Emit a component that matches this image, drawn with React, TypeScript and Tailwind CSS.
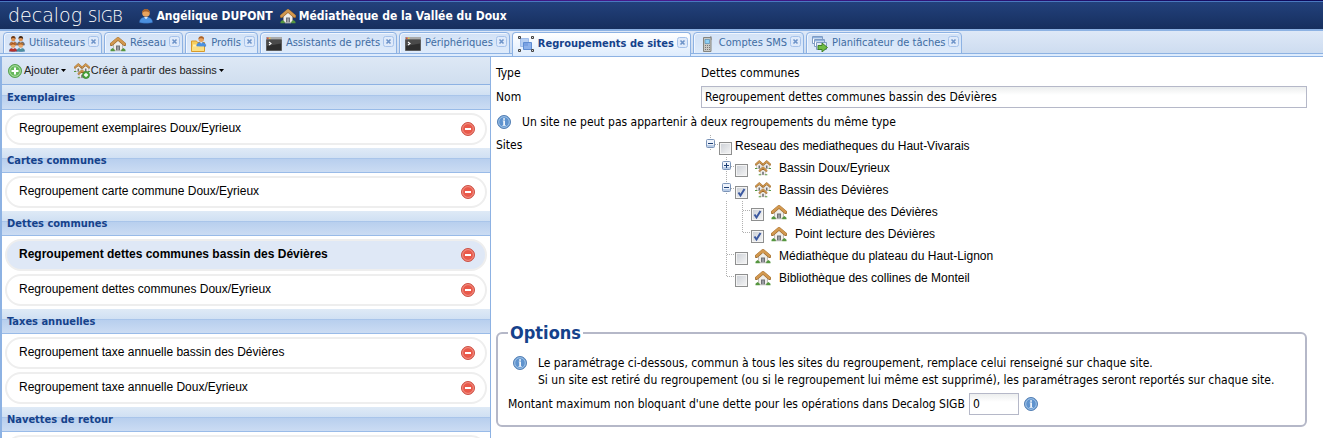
import { useState } from 'react';
import type { ReactNode } from 'react';

function HouseShape() {
  return (
    <>
      <path d="M3.500 7.500 8 3.500l4.500 4V14.500h-9z" fill="#efede9" stroke="#a9a49c" strokeWidth=".7" />
      <path d="M6 14.500V9.500h4v5z" fill="#6f7075" />
      <path d="M7.200 14.500v-4h1.600v4z" fill="#a5a8ae" />
      <path d="M1.500 8.300 8 2.700l6.500 5.600" fill="none" stroke="#96652a" strokeWidth="3.400" strokeLinecap="round" strokeLinejoin="round" />
      <path d="M1.600 8 8 2.500 14.400 8" fill="none" stroke="#d2984f" strokeWidth="2.400" strokeLinecap="round" strokeLinejoin="round" />
      <path d="M.500 15.200v-1.400L2.500 12l2.300 1.800v1.400zM11.200 15.200v-1.400l2.300-1.800 2 1.800v1.400z" fill="#55963f" />
      <path d="M5 14.500h6v.8H5z" fill="#c9c9c9" />
    </>
  );
}

function SmallHouseShape() {
  return (
    <>
      <path d="M1.500 3.500h5.500v5H1.500z" fill="#f1efeb" stroke="#b5afa6" strokeWidth=".5" />
      <path d="M3.500 5.500h1.600v3H3.500z" fill="#6f7075" />
      <path d="M1 4.500 4.300 1.500l3.300 3" fill="none" stroke="#96652a" strokeWidth="2.200" strokeLinecap="round" strokeLinejoin="round" />
      <path d="M1 4.300 4.300 1.300l3.300 3" fill="none" stroke="#cd964f" strokeWidth="1.500" strokeLinecap="round" strokeLinejoin="round" />
      <path d="M0 8h2.200v1H0zM6.400 8h2.200v1H6.400z" fill="#55963f" />
    </>
  );
}

function HouseIcon() {
  return (
    <svg viewBox="0 0 16 16" className="size-4 shrink-0" aria-hidden="true">
      <HouseShape />
    </svg>
  );
}

function HousesIcon({ plus }: { plus?: boolean }) {
  return (
    <svg viewBox="0 0 16 16" className="size-4 shrink-0" aria-hidden="true">
      <SmallHouseShape />
      <g transform="translate(7.400 0)"><SmallHouseShape /></g>
      <g transform="translate(3.700 6.200)"><SmallHouseShape /></g>
      {plus && (
        <>
          <circle cx="12" cy="12" r="3.500" fill="#4faa41" stroke="#2f7d27" strokeWidth=".7" />
          <path d="M12 10v4M10 12h4" stroke="#fff" strokeWidth="1.300" />
        </>
      )}
    </svg>
  );
}

function UserShape({ head = '#e8a35e', hair = '#a8612a', body = '#4a90e0' }) {
  return (
    <>
      <path d="M1.500 14.500C1.500 10.500 4.500 9 8 9s6.500 1.500 6.500 5.500c-2 .9-11 .9-13 0z" fill={body} stroke="#2d62ad" strokeOpacity=".5" strokeWidth=".8" />
      <path d="M6 9.200 8 11l2-1.800z" fill="#fff" />
      <circle cx="8" cy="5" r="3.800" fill={head} />
      <path d="M4.200 5.200C4 2.500 5.500.9 8 .9s4 1.600 3.800 4.300C10.500 3.800 9 3.600 7.500 3.600 6 3.600 5 4.200 4.200 5.200z" fill={hair} />
    </>
  );
}

function UserIcon() {
  return (
    <svg viewBox="0 0 16 16" className="size-4 shrink-0" aria-hidden="true">
      <UserShape />
    </svg>
  );
}

function UsersIcon() {
  return (
    <svg viewBox="0 0 16 16" className="size-4 shrink-0" aria-hidden="true">
      <g transform="translate(-.5 -.5) scale(.6 .66)"><UserShape body="#b9713c" hair="#6d3a16" head="#dd9150" /></g>
      <g transform="translate(7 -.5) scale(.6 .66)"><UserShape body="#7d6a58" hair="#3f2a1c" head="#dd9150" /></g>
      <g transform="translate(-.8 6.300) scale(.62)"><UserShape body="#b8322c" hair="#a8561c" head="#eda867" /></g>
      <g transform="translate(6.800 6.300) scale(.62)"><UserShape body="#4e8f9c" hair="#b06a2b" head="#eda867" /></g>
    </svg>
  );
}

function ProfileIcon() {
  return (
    <svg viewBox="0 0 16 16" className="size-4 shrink-0" aria-hidden="true">
      <path d="M.5 15.500V5h5l1 1.500h7v9z" fill="#f6cf5f" stroke="#d79a2b" />
      <path d="M2 8.500h10V14H2z" fill="#fdf0b4" />
      <g transform="translate(4.500 -.3) scale(.72)"><UserShape /></g>
      <path d="M1 10.500h12v4.500H1z" fill="#fbe084" />
    </svg>
  );
}

function ConsoleIcon() {
  return (
    <svg viewBox="0 0 16 16" className="size-4 shrink-0" aria-hidden="true">
      <path d="M.5 1.500h15v13H.5z" fill="#2e2e2e" stroke="#5d5d5d" />
      <path d="M0 1h16v2.500H0z" fill="#a9a9a9" />
      <path d="M1 1.500h1.500V3H1z" fill="#d64b3b" />
      <path d="M3 1.500h1.500V3H3z" fill="#e9c548" />
      <path d="M1 4h14v3.500L1 10z" fill="#4a4a4a" />
      <path d="m3 6 2 1.500L3 9" fill="none" stroke="#fff" strokeWidth="1.100" />
    </svg>
  );
}

function GroupIcon() {
  return (
    <svg viewBox="0 0 16 16" className="size-4 shrink-0" aria-hidden="true">
      <path d="M2.500 2.500h8v8h-8z" fill="#b7cff2" stroke="#a0bdea" />
      <path d="M5.500 6.500h8v7h-8z" fill="#8bb0ea" stroke="#5e8cd2" />
      <path d="M6 7h4v3H6z" fill="#78a0e2" />
      <path d="M.500.500h2v2h-2zM13.500.500h2v2h-2zM.500 13.500h2v2h-2zM13.500 13.500h2v2h-2z" fill="#ddd" stroke="#444" />
    </svg>
  );
}

function PhoneIcon() {
  return (
    <svg viewBox="0 0 16 16" className="size-4 shrink-0" aria-hidden="true">
      <path d="M11 .500h1.500V4H11z" fill="#777" />
      <path d="M4.500 1.500h7.500v14H4.500z" fill="#c8c8c4" stroke="#85857f" />
      <path d="M6 3.500h4.500v4H6z" fill="#8fd0f4" stroke="#4a86b0" strokeWidth=".6" />
      <path d="M6 9h1v1H6zm2 0h1v1H8zm2 0h1v1h-1zm-4 2h1v1H6zm2 0h1v1H8zm2 0h1v1h-1zm-4 2h1v1H6zm2 0h1v1H8zm2 0h1v1h-1z" fill="#777" />
    </svg>
  );
}

function PlannerIcon() {
  return (
    <svg viewBox="0 0 16 16" className="size-4 shrink-0" aria-hidden="true">
      <path d="M.5.500h10v7H.5z" fill="#fff" stroke="#7f9cc4" />
      <path d="M1 1h9v1.500H1z" fill="#8fb2df" />
      <path d="M2.500 3.500h10v7h-10z" fill="#fff" stroke="#7f9cc4" />
      <path d="M3 4h9v1.500H3z" fill="#8fb2df" />
      <path d="M4.500 6.500h10v7h-10z" fill="#dfe8f5" stroke="#7f9cc4" />
      <path d="M6 9.500h4V7l5.500 4.500L10 16v-2.500H6z" fill="#6fbd45" stroke="#38791f" strokeWidth=".9" />
    </svg>
  );
}

function InfoIcon() {
  return (
    <svg viewBox="0 0 16 16" className="size-4 shrink-0" role="img" aria-label="Information">
      <circle cx="8" cy="8" r="6.500" fill="#5f93ce" stroke="#5580b4" />
      <circle cx="8" cy="8" r="5.300" fill="none" stroke="#a9c9ea" strokeWidth=".9" />
      <path d="M7.200 4.200h1.700v1.500H7.200zM6.700 6.500h2.200V11h.8v.8H6.500V11h.8V7.300h-.6z" fill="#fff" />
    </svg>
  );
}

function RemoveIcon() {
  return (
    <svg viewBox="0 0 16 16" className="size-4" aria-hidden="true">
      <circle cx="8" cy="8" r="6.500" fill="#e9594a" stroke="#cb5347" />
      <circle cx="8" cy="8" r="5.400" fill="none" stroke="#f3a096" strokeWidth=".8" />
      <path d="M5 7h6v2H5z" fill="#fff" />
    </svg>
  );
}

function AddIcon() {
  return (
    <svg viewBox="0 0 16 16" className="size-4" aria-hidden="true">
      <circle cx="8" cy="8" r="6.500" fill="#67b95c" stroke="#57a14f" />
      <circle cx="8" cy="8" r="5.300" fill="none" stroke="#b5e0ac" strokeWidth=".9" />
      <path d="M7 4.500h2V7h2.500v2H9v2.500H7V9H4.500V7H7z" fill="#fff" />
    </svg>
  );
}

function Caret() {
  return (
    <svg viewBox="0 0 5 3" className="ml-px h-[3px] w-[5px]" aria-hidden="true">
      <path d="M0 0h5L2.500 3z" fill="#000" />
    </svg>
  );
}

function CloseIcon() {
  return (
    <svg viewBox="0 0 11 11" className="size-[11px]" aria-hidden="true">
      <rect x=".5" y=".5" width="10" height="10" rx="2" fill="#dfeafa" stroke="#a6c2ea" />
      <path d="m3.500 3.500 4 4m0-4-4 4" stroke="#6d93c8" strokeWidth="1.600" />
    </svg>
  );
}

const tabs = [
  { label: 'Utilisateurs', icon: UsersIcon },
  { label: 'Réseau', icon: HouseIcon },
  { label: 'Profils', icon: ProfileIcon },
  { label: 'Assistants de prêts', icon: ConsoleIcon },
  { label: 'Périphériques', icon: ConsoleIcon },
  { label: 'Regroupements de sites', icon: GroupIcon, active: true },
  { label: 'Comptes SMS', icon: PhoneIcon },
  { label: 'Planificateur de tâches', icon: PlannerIcon },
];

const groups = [
  { title: 'Exemplaires', items: ['Regroupement exemplaires Doux/Eyrieux'] },
  { title: 'Cartes communes', items: ['Regroupement carte commune Doux/Eyrieux'] },
  {
    title: 'Dettes communes',
    items: ['Regroupement dettes communes bassin des Dévières', 'Regroupement dettes communes Doux/Eyrieux'],
  },
  {
    title: 'Taxes annuelles',
    items: ['Regroupement taxe annuelle bassin des Dévières', 'Regroupement taxe annuelle Doux/Eyrieux'],
  },
  { title: 'Navettes de retour', items: [''] },
];

type Slot = 'minus' | 'plus' | 'line' | 'tee' | 'end';

const sites: { label: string; slots: Slot[]; icon?: 'house' | 'houses'; checked?: boolean }[] = [
  { label: 'Reseau des mediatheques du Haut-Vivarais', slots: ['minus'] },
  { label: 'Bassin Doux/Eyrieux', slots: ['plus'], icon: 'houses' },
  { label: 'Bassin des Dévières', slots: ['minus'], icon: 'houses', checked: true },
  { label: 'Médiathèque des Dévières', slots: ['line', 'tee'], icon: 'house', checked: true },
  { label: 'Point lecture des Dévières', slots: ['line', 'end'], icon: 'house', checked: true },
  { label: 'Médiathèque du plateau du Haut-Lignon', slots: ['tee'], icon: 'house' },
  { label: 'Bibliothèque des collines de Monteil', slots: ['end'], icon: 'house' },
];

// one 16x22 cell of the tree gutter: dotted guide line plus optional expander
function TreeSlot({ kind }: { kind: Slot }) {
  const expander = kind === 'minus' || kind === 'plus';
  return (
    <svg viewBox="0 0 16 22" className="h-[22px] w-4 shrink-0" aria-hidden="true">
      <g stroke="#b0b0b0" strokeDasharray="1 1">
        <path d={kind === 'end' ? 'M7.500 0v10' : kind === 'minus' ? 'M7.500 0v16' : 'M7.500 0v22'} />
        {kind !== 'line' && <path d="M8 9.500h7" />}
      </g>
      {expander && (
        <>
          <rect x="3.500" y="4.500" width="8" height="8" rx="1" fill="#eef3fb" stroke="#7b94b8" />
          <path d="M4 10h7v2H4z" fill="#b9cce6" />
          <path d={kind === 'plus' ? 'M5 8.500h5M7.500 6v5' : 'M5 8.500h5'} stroke="#1d3f75" />
        </>
      )}
    </svg>
  );
}

function SiteRow({ site, root }: { site: (typeof sites)[number]; root: boolean }) {
  return (
    <li className={`flex h-[22px] items-center ${root ? 'pl-0' : 'pl-4'}`}>
      {site.slots.map((kind, i) => (
        <TreeSlot key={i} kind={kind} />
      ))}
      <label className="flex items-center">
        <span className="mt-1 grid size-[13px]">
          <input
            type="checkbox"
            defaultChecked={site.checked}
            className="peer col-start-1 row-start-1 size-[13px] appearance-none border border-[#8e8f8f] bg-linear-to-br from-[#cbcfd5] to-[#f6f6f6] shadow-[inset_0_0_0_1px_#f4f4f4]"
          />
          <svg viewBox="0 0 13 13" className="pointer-events-none col-start-1 row-start-1 hidden size-[13px] peer-checked:block" aria-hidden="true">
            <path d="m3.500 6.500 2 3L9.500 3" fill="none" stroke="#3c59a0" strokeWidth="2" />
          </svg>
        </span>
        {site.icon && (
          <span className="mr-[5px] ml-[7px]">{site.icon === 'house' ? <HouseIcon /> : <HousesIcon />}</span>
        )}
        <span className="pl-[3px]">{site.label}</span>
      </label>
    </li>
  );
}

function ToolbarButton({ icon, children }: { icon: ReactNode; children: ReactNode }) {
  return (
    <button type="button" className="flex items-center gap-px">
      {icon}
      <span>{children}</span>
      <Caret />
    </button>
  );
}

export default function App() {
  const [selected, setSelected] = useState(groups[2].items[0]);

  return (
    <div className="flex h-screen flex-col overflow-hidden bg-white font-['DejaVu_Sans_Condensed','DejaVu_Sans',sans-serif] text-xs text-black">
      <div className="h-px shrink-0 bg-linear-to-r from-[#0c0a5a] via-[#4a1a8c] to-[#0c0a5a]" />
      <header className="flex h-[30px] shrink-0 items-center border-t border-b-2 border-t-[#4a78c0] border-b-[#8db2e3] bg-linear-to-b from-[#23417c] to-[#162f5e] pl-2 font-bold text-white">
        <a href="#" className="flex items-baseline gap-1.5 leading-none">
          <span className="font-['DejaVu_Sans',sans-serif] text-[19px] leading-6 font-extralight">decalog</span>
          <span className="font-['Open_Sans',sans-serif] text-base leading-6 font-light">SIGB</span>
        </a>
        <span className="ml-[15px] flex items-center gap-[3px]">
          <UserIcon />
          Angélique DUPONT
        </span>
        <span className="ml-[7px] flex items-center gap-[3px]">
          <HouseIcon />
          Médiathèque de la Vallée du Doux
        </span>
      </header>

      <nav className="flex h-[26px] shrink-0 gap-0.5 border-b border-[#8db2e3] bg-linear-to-b from-[#dee8f7] to-[#cbdbef] pt-px pl-[3px] shadow-[inset_0_-2px_0_#deecfd,inset_0_-3px_0_#8db2e3]">
        {tabs.map(({ label, icon: Icon, active }) => (
          <div
            key={label}
            className={`flex items-center rounded-t-sm border border-[#8db2e3] pr-0.5 pl-[5px] ${
              active
                ? 'h-6 border-b-0 bg-linear-to-b from-white to-[#deecfd] pb-px font-bold text-[#15428b]'
                : 'h-[22px] bg-linear-to-b from-[#d3e2f6] to-[#deebfb] pt-px text-[#416da3] shadow-[inset_1px_1px_0_#f0f6ff]'
            }`}
          >
            <a href="#" className="flex items-center gap-1 text-[11px]">
              <Icon />
              {label}
            </a>
            <button type="button" aria-label={`Fermer ${label}`} className="mb-1 ml-[3px]">
              <CloseIcon />
            </button>
          </div>
        ))}
      </nav>

      <div className="flex min-h-0 flex-1">
        <aside className="w-[491px] shrink-0 overflow-hidden border-r border-l-2 border-[#8db2e3] font-['Liberation_Sans',Arial,sans-serif]">
          <div className="flex h-7 items-center gap-2 border-b border-[#8db2e3] bg-linear-to-b from-[#dde8f5] to-[#d0deef] pl-[5px] text-[11px] text-[#222]">
            <ToolbarButton icon={<AddIcon />}>Ajouter</ToolbarButton>
            <ToolbarButton icon={<HousesIcon plus />}>Créer à partir des bassins</ToolbarButton>
          </div>
          {groups.map((group) => (
            <section key={group.title}>
              <h2 className="h-[25px] border-b border-[#99bbe8] bg-linear-to-b from-[#e0ebf7] from-0% via-[#cddff3] via-45% to-[#cddef3] pl-[5px] font-['DejaVu_Sans_Condensed','DejaVu_Sans',sans-serif] text-[11px] font-bold text-[#15428b]">
                <span className="-ml-[5px] flex h-6 items-center bg-[linear-gradient(to_bottom,#dfeaf6_0,#d0e0f3_10px,#a9c5ea_10px,#a9c5ea_11px,#b8cfee_11px,#cbdcf3_24px)] pt-0.5 pl-[5px]">
                  {group.title}
                </span>
              </h2>
              <ul className="flex flex-col gap-[3px] p-[3px]">
                {group.items.map((item) => (
                  <li
                    key={item}
                    className={`flex h-8 items-center justify-between rounded-full border-2 border-[#eee] pr-[9px] pl-3 ${
                      item === selected ? 'bg-[#dfe8f6] font-bold' : 'bg-white'
                    }`}
                  >
                    <button type="button" onClick={() => setSelected(item)} className="mb-0.5">
                      {item}
                    </button>
                    <button type="button" aria-label="Supprimer">
                      <RemoveIcon />
                    </button>
                  </li>
                ))}
              </ul>
            </section>
          ))}
        </aside>

        <main className="min-w-0 flex-1 overflow-hidden pt-1 pr-4 pl-[5px]">
          <form>
            <div className="flex h-6 items-center">
              <span className="w-[205px]">Type</span>
              <span>Dettes communes</span>
            </div>
            <div className="flex h-6 items-center">
              <label htmlFor="nom" className="w-[205px]">Nom</label>
              <input
                id="nom"
                defaultValue="Regroupement dettes communes bassin des Dévières"
                className="h-[22px] min-w-0 flex-1 border border-[#b5b8c8] bg-linear-to-b from-[#eceeee] to-white to-40% px-[3px]"
              />
            </div>
            <p className="flex h-[26px] items-center gap-2.5">
              <InfoIcon />
              Un site ne peut pas appartenir à deux regroupements du même type
            </p>
            <div className="flex">
              <span className="w-[205px] leading-5">Sites</span>
              <ul className="pl-0.5 font-['Liberation_Sans',Arial,sans-serif]">
                {sites.map((site, i) => (
                  <SiteRow key={site.label} site={site} root={i === 0} />
                ))}
              </ul>
            </div>

            <fieldset className="mt-8 rounded-md border-2 border-[#b5b8c8] px-2.5 pb-2.5">
              <legend className="px-0.5 text-lg leading-6 font-bold text-[#15428b]">Options</legend>
              <div className="flex gap-2.5 pt-2.5 pl-1 leading-[17px]">
                <InfoIcon />
                <p>
                  Le paramétrage ci-dessous, commun à tous les sites du regroupement, remplace celui renseigné sur chaque site.
                  <br />
                  Si un site est retiré du regroupement (ou si le regroupement lui même est supprimé), les paramétrages seront reportés sur chaque site.
                </p>
              </div>
              <div className="mt-1 flex items-center">
                <label htmlFor="montant">Montant maximum non bloquant d'une dette pour les opérations dans Decalog SIGB</label>
                <input
                  id="montant"
                  defaultValue="0"
                  className="mr-1 ml-1 h-[22px] w-[50px] border border-[#b5b8c8] bg-linear-to-b from-[#eceeee] to-white to-40% px-[3px]"
                />
                <InfoIcon />
              </div>
            </fieldset>
          </form>
        </main>
      </div>
    </div>
  );
}
